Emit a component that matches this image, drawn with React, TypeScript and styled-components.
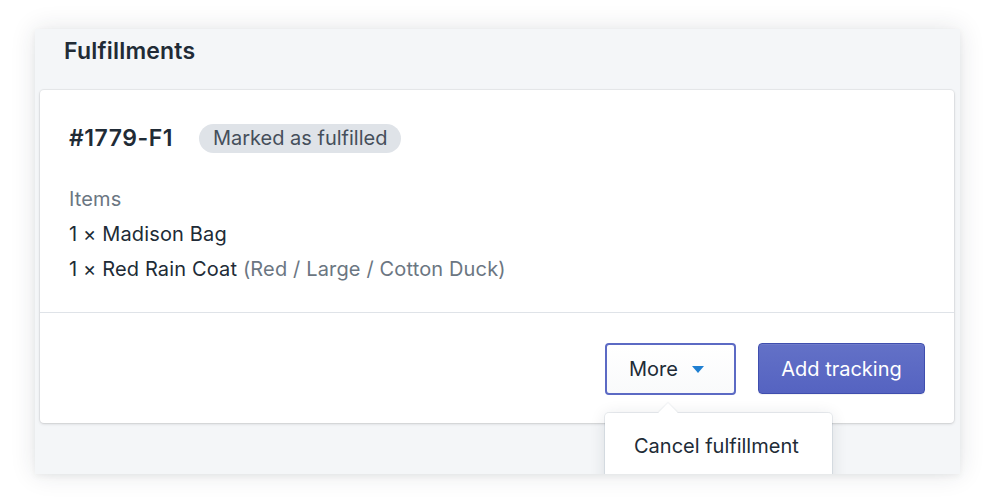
import React from "react";
import styled, { createGlobalStyle } from "styled-components";

const GlobalStyle = createGlobalStyle`
  html, body {
    margin: 0;
    padding: 0;
    background: #ffffff;
  }
  body {
    font-family: Inter, "Noto Sans", "Liberation Sans", sans-serif;
    color: #212b36;
    -webkit-font-smoothing: antialiased;
  }
`;

const Page = styled.div`
  width: 1000px;
  height: 497px;
  padding: 29px 40px 0 35px;
  box-sizing: border-box;
`;

const Panel = styled.section`
  width: 925px;
  height: 445px;
  background: #f4f6f8;
  overflow: hidden;
  box-shadow: 0 0 24px rgba(33, 43, 54, 0.12), 0 2px 6px rgba(33, 43, 54, 0.06);
  display: flex;
  flex-direction: column;
`;

const PanelTitle = styled.h2`
  margin: 0 0 17px;
  padding: 0 29px;
  height: 44px;
  line-height: 44px;
  font-size: 23px;
  letter-spacing: 0.2px;
  font-weight: 600;
  color: #212b36;
`;

const Card = styled.div`
  margin: 0 6px 0 5px;
  background: #ffffff;
  border-radius: 4px;
  box-shadow: 0 0 0 1px rgba(63, 63, 68, 0.06), 0 1px 3px rgba(63, 63, 68, 0.18);
`;

const Section = styled.div`
  padding: 29px 29px 25px;
`;

const HeaderRow = styled.div`
  display: flex;
  align-items: center;
  gap: 26px;
  height: 38px;
  margin-bottom: 25px;
`;

const OrderName = styled.h3`
  margin: 0;
  font-size: 23px;
  letter-spacing: 0.5px;
  font-weight: 600;
  color: #212b36;
`;

const Badge = styled.span`
  display: inline-flex;
  align-items: center;
  height: 29px;
  padding: 0 14px;
  border-radius: 15px;
  background: #dfe3e8;
  color: #454f5b;
  font-size: 20px;
`;

const Line = styled.div<{ $muted?: boolean }>`
  line-height: 35px;
  font-size: 20px;
  letter-spacing: 0.15px;
  color: ${(p) => (p.$muted ? "#6b7682" : "#212b36")};
`;

const Variant = styled.span`
  color: #6b7682;
`;

const Footer = styled.div`
  border-top: 1px solid #dfe3e8;
  padding: 30px 29px 28px;
  display: flex;
  justify-content: flex-end;
  gap: 22px;
`;

const MenuWrap = styled.div`
  position: relative;
`;

const MoreButton = styled.button`
  display: flex;
  align-items: center;
  gap: 14px;
  height: 52px;
  width: 131px;
  padding: 0 0 0 22px;
  box-sizing: border-box;
  border: 2px solid #5c6ac4;
  border-radius: 4px;
  background: linear-gradient(#ffffff, #f9fafb);
  font-family: inherit;
  font-size: 20px;
  color: #212b36;
`;

const PrimaryButton = styled.button`
  height: 51px;
  width: 167px;
  border: 1px solid #3f4eae;
  border-radius: 4px;
  background: linear-gradient(#6371c7, #5563c1);
  box-shadow: inset 0 1px 0 0 #6f7bcb, 0 1px 0 0 rgba(22, 29, 37, 0.05);
  font-family: inherit;
  font-size: 20px;
  color: #ffffff;
`;

const Popover = styled.div`
  position: absolute;
  top: 70px;
  left: 0;
  width: 227px;
  height: 80px;
  background: #ffffff;
  border-radius: 4px;
  box-shadow: 0 0 0 1px rgba(6, 44, 82, 0.08), 0 2px 16px rgba(33, 43, 54, 0.12);

  &::before {
    content: "";
    position: absolute;
    top: -7px;
    left: 56px;
    width: 14px;
    height: 14px;
    background: #ffffff;
    transform: rotate(45deg);
    box-shadow: -1px -1px 1px rgba(6, 44, 82, 0.06);
  }
`;

const MenuItem = styled.div`
  position: relative;
  padding: 21px 29px;
  font-size: 20px;
  color: #212b36;
`;

export default function App(): JSX.Element {
  return (
    <>
      <GlobalStyle />
      <Page>
        <Panel>
          <PanelTitle>Fulfillments</PanelTitle>
          <Card>
            <Section>
              <HeaderRow>
                <OrderName>#1779-F1</OrderName>
                <Badge>Marked as fulfilled</Badge>
              </HeaderRow>
              <Line $muted>Items</Line>
              <Line>1 × Madison Bag</Line>
              <Line>
                1 × Red Rain Coat <Variant>(Red / Large / Cotton Duck)</Variant>
              </Line>
            </Section>
            <Footer>
              <MenuWrap>
                <MoreButton>
                  More
                  <svg width="12" height="7" viewBox="0 0 12 7">
                    <path d="M0 0h12L6 7z" fill="#1f7fd1" />
                  </svg>
                </MoreButton>
                <Popover>
                  <MenuItem>Cancel fulfillment</MenuItem>
                </Popover>
              </MenuWrap>
              <PrimaryButton>Add tracking</PrimaryButton>
            </Footer>
          </Card>
        </Panel>
      </Page>
    </>
  );
}
